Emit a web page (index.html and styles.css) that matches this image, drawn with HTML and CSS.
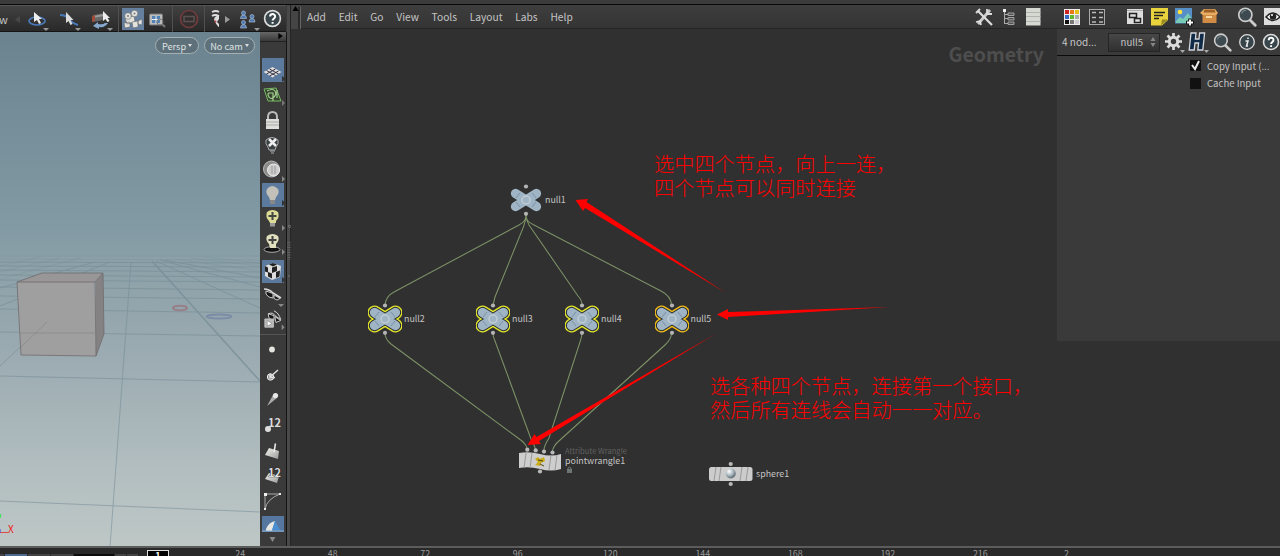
FILE: index.html
```html
<!DOCTYPE html>
<html lang="zh">
<head>
<meta charset="utf-8">
<title>Geometry</title>
<link rel="stylesheet" href="styles.css">
</head>
<body>
<svg width="0" height="0" class="defs">
  <defs>
    <radialGradient id="ball" cx=".35" cy=".3" r=".8"><stop offset="0" stop-color="#fff"/><stop offset=".5" stop-color="#a9b7be"/><stop offset="1" stop-color="#435059"/></radialGradient>
    <linearGradient id="gray" x2="1" y2="1"><stop offset="0" stop-color="#f4f4f0"/><stop offset="1" stop-color="#999"/></linearGradient>
    <symbol id="null" viewBox="-17 -20 34 40" overflow="visible">
      <path class="outline" d="M-10.500-6.500L10.500 6.500M10.500-6.500L-10.500 6.500"/>
      <path class="gap" d="M-10.500-6.500L10.500 6.500M10.500-6.500L-10.500 6.500"/>
      <path d="M-10.500-6.500L10.500 6.500M10.500-6.500L-10.500 6.500" stroke="#9fb5c6" stroke-width="9.300" stroke-linecap="round"/>
      <path d="M-6-4h12v8h-12z" fill="#9fb5c6"/>
      <path d="M-10-2l4-5M-6 7l-4-5M6-7l4 5M10 2l-4 5" stroke="#71889a" stroke-width=".8"/>
      <circle r="4" fill="#9fb5c6" stroke="#c3ccd4" stroke-width="1.500"/>
      <circle cy="-13.500" r="2.100" fill="#b4b4b4"/><circle cy="13.800" r="2.100" fill="#b4b4b4"/>
    </symbol>
    <symbol id="help" viewBox="0 0 18 18"><circle cx="9" cy="9" r="7.500" fill="#39464b" stroke="#ddd" stroke-width="1.600"/><path d="M6.700 7.200C6.700 4 11.500 4.100 11.500 7c0 2-2.400 1.900-2.400 4M9.100 12.300v1.700" stroke="#fff" stroke-width="1.900" fill="none"/></symbol>
    <symbol id="lens" viewBox="0 0 20 20"><path d="M12 12l5.500 5.500" stroke="#ccc" stroke-width="2.600" stroke-linecap="round"/><circle cx="8.500" cy="8" r="6" fill="#3d4b50" stroke="#ccc" stroke-width="1.500"/><path d="M5 7q1-3 4-3" stroke="#728187" fill="none"/></symbol>
  </defs>
</svg>
<div class="strip"></div>
<main class="main">
  <section class="viewer">
    <div class="toolbar">
      <span class="mode">w</span>
      <svg width="17" height="26" viewBox="9 5 17 26"><path d="M20 15v7l-5-3.500z" fill="#484848"/></svg>
      <svg width="28" height="26" viewBox="26 5 28 26"><ellipse cx="37" cy="20" rx="8" ry="4" fill="none" stroke="#4b79b8" stroke-width="1.700"/><path d="M34 11v10l3-2 2 4 2-1-2-4h3z" fill="#eee"/><path d="M43 27h6l-3 3z" fill="#999"/></svg>
      <svg width="32" height="26" viewBox="54 5 32 26"><path d="M60 14q6 0 9 4t9 6" fill="none" stroke="#4878b7" stroke-width="2"/><path d="M66 11v11l2.500-2 2 4 2-1-2-4h3z" fill="#ddd"/><path d="M75 27h6l-3 3z" fill="#999"/></svg>
      <svg width="32" height="26" viewBox="86 5 32 26"><path d="M93 14l11-2v7l-11 2z" fill="#666"/><path d="M93 15l11-2v2l-11 2z" fill="#999"/><path d="M92 15l3-1v6l-3 1z" fill="#a04a3a"/><path d="M103 10v10l2.500-2 2 3 2-1-2-3h2.500z" fill="#eee"/><path d="M108 22q-3 5-9 4v2l-6-3 5-4v2q5 1 7-1z" fill="#87a9d0"/><path d="M107 27h6l-3 3z" fill="#999"/></svg>
      <i class="divider"></i>
      <svg class="camera" width="22" height="22" viewBox="122 8 22 22"><g fill="#e2e2df" stroke="#666" stroke-width=".6"><path d="M125 18l9-2 1 6-8 2zM124 23l6-1v5l-5 1z"/><circle cx="128" cy="16" r="3.300"/><circle cx="134.500" cy="13.500" r="3.300"/><path d="M132 22l6-1v6l-5 1zM138 21l4-2v6l-4-1z"/></g><circle cx="128" cy="16" r="1" fill="#777"/><circle cx="134.500" cy="13.500" r="1" fill="#777"/></svg>
      <svg width="28" height="26" viewBox="144 5 28 26"><rect x="149.500" y="13" width="13" height="11" rx="1" fill="#bbb" stroke="#777"/><rect x="152" y="15" width="8" height="7" fill="#5083b4"/><path d="M156 15v7M152 18.500h8" stroke="#eee"/><circle cx="160" cy="21" r="3" fill="none" stroke="#777"/><path d="M162 23l3 3" stroke="#777" stroke-width="2"/></svg>
      <i class="divider"></i>
      <svg width="31" height="26" viewBox="173 5 31 26"><circle cx="189" cy="18" r="8.500" fill="#322e2e" stroke="#703c3d" stroke-width="1.700"/><rect x="184" y="15.500" width="10" height="5" fill="none" stroke="#5a5050" stroke-width="1.600"/></svg>
      <i class="divider"></i>
      <svg width="33" height="26" viewBox="205 5 33 26"><path d="M212 11q4-2 7 0M212 15q3-2 7 0" fill="none" stroke="#ddd" stroke-width="1.800"/><path d="M219 14q-7 2-4 7t4 5v-3l-2-2 2-3z" fill="#ddd"/><circle cx="215.500" cy="20.500" r="1" fill="#b33"/><path d="M225 15l5 3.500-5 3.500z" fill="#999"/></svg>
      <svg width="25" height="26" viewBox="238 5 25 26"><g fill="#4c79b3" stroke="#bcc8d6" stroke-width=".6"><path d="M240.500 17.500q0-3.500 3-3.500t3 3.500zM240.500 27q0-3.500 3-3.500t3 3.500zM249 21q0-3.500 3-3.500t3 3.500z"/><circle cx="243.500" cy="12" r="2"/><circle cx="243.500" cy="21.500" r="2"/><circle cx="252" cy="15.500" r="2"/></g><path d="M254 27h6l-3 3z" fill="#999"/></svg>
      <svg width="19" height="19"><use href="#help"/></svg>
    </div>
    <div class="stage">
      <div class="viewport">
        <svg class="scene" width="260" height="515" viewBox="0 32 260 515">
          <g stroke="#718994" fill="none" stroke-width=".7" opacity=".3"><path d="M0 256h260M0 259l260 1M80 258L0 279M60 258L0 272M40 257L0 266M175 259l85 12M190 258l70 8M205 257l55 6"/></g>
          <g stroke="#718994" fill="none" stroke-width=".8" opacity=".65">
            <path d="M0 262l260 1M0 266l260 1M0 270l260 2M0 275l260 2M0 280l260 2M0 287l260 3M0 296l260 3M0 309l260 4M0 332l260 4M0 376l260 6M0 501l260 11"/>
            <path d="M131 262L110 547M156 261l104 47M160 260l100 27M165 260l95 18M110 262L0 306M95 262L0 288M0 366l48-45"/>
            <path d="M152 261l108 120" stroke-width="1.500"/>
          </g>
          <path d="M17 282l25-9h61l-7 9z" fill="#989696"/><path d="M96 282l7-9 1 61-8 22z" fill="#858283"/><path d="M17 282h78l1 74-75-1z" fill="#a09f9f"/>
          <path d="M17 282l25-9h61l1 61-8 22-75-1zM17 282h78l8-9M95 282l1 74" fill="none" stroke="#706b6c" stroke-width=".8"/>
          <path d="M20 333h76M21 347l26-25" stroke="#858789" stroke-width=".7"/>
          <ellipse cx="180" cy="308" rx="7" ry="2.300" fill="none" stroke="#987f88" stroke-width="2"/><ellipse cx="219" cy="316.500" rx="12.500" ry="2" fill="none" stroke="#7c8ba6" stroke-width="1.800"/>
          <path d="M0 532.500h8" stroke="#e34a4a"/><path d="M0 529v4" stroke="#34d"/><path d="M0 518l1-4" stroke="#2e4"/>
        </svg>
        <div class="cameras"><button class="pill">Persp<b></b></button><button class="pill wide">No cam<b></b></button></div>
        <span class="axis">X</span>
      </div>
      <div class="tools">
        <svg class="tools-head" width="26" height="10" viewBox="260 32 26 10"><path d="M279 33l5 3.500-5 3.500z" fill="#000"/></svg>
        <svg width="26" height="41" viewBox="260 42 26 41"><rect x="262" y="58" width="22" height="24" fill="#5c7a9e"/><path d="M263.500 72l9-5 9 5-9 5.500z" fill="#ddd"/><path d="M266.500 70.500l9 5M269.500 69l9 5M266.500 74l9-5M269.500 76l9-5" stroke="#334"/><path d="M282 76l4 3-4 3z" fill="#333"/></svg>
        <svg width="26" height="25" viewBox="260 83 26 25"><path d="M264 89l12-1 5 13-13 0z" fill="#35452f" stroke="#78b961"/><path d="M267 91q6-3 8 0t-1 6-5 0 0-4h4v8M277 90v8" fill="none" stroke="#a5cf90" stroke-width="1.200"/><path d="M282 100l3 3-3 3z" fill="#777"/></svg>
        <svg width="26" height="24" viewBox="260 108 26 24"><path d="M268 120v-3q0-5 4.500-5t4.500 5v3" fill="none" stroke="#bbb" stroke-width="2"/><rect x="266" y="119" width="13" height="10" fill="#dededa"/><path d="M266 122h13M266 125h13" stroke="#aaa"/></svg>
        <svg width="26" height="25" viewBox="260 132 26 25"><path d="M268 147q-3-3-2-7 6-5 12 0 1 4-2 7l-1 3h-6z" fill="#3b4142" stroke="#aaa"/><path d="M269 139l7 7M276 139l-7 7" stroke="#eee" stroke-width="2.500"/><path d="M270 151h5M271 153h3" stroke="#aaa"/></svg>
        <svg width="26" height="25" viewBox="260 157 26 25"><circle cx="271.500" cy="169" r="8" fill="#8a8a88" stroke="#bbb"/><circle cx="273.500" cy="170" r="6" fill="#ccc" stroke="#f0f0f0"/><path d="M272 166v8M275 166v8" stroke="#999"/><path d="M282 176l3 3-3 3z" fill="#888"/></svg>
        <svg width="26" height="25" viewBox="260 182 26 25"><rect x="262" y="183" width="22" height="24" fill="#5c7a9e"/><path d="M269 197q-4-4-2-8 5-6 11 0 2 4-2 8l-1 3h-5z" fill="#c1c1ba"/><path d="M270 200h5v4h-5z" fill="#888"/><path d="M282 200l4 3-4 3z" fill="#333"/></svg>
        <svg width="26" height="24" viewBox="260 207 26 24"><path d="M269 221q-4-4-2-9 5.500-4 11 0 2 5-2 9v2h-6z" fill="#dcdc98"/><path d="M272.500 212v8M268.500 216h8" stroke="#444" stroke-width="2"/><path d="M270 223h5v3.500h-5z" fill="#999"/><path d="M282 225l3 3-3 3z" fill="#888"/></svg>
        <svg width="26" height="25" viewBox="260 231 26 25"><ellipse cx="272" cy="249.500" rx="8" ry="2.800" fill="#111" stroke="#aaa"/><path d="M269 244q-4-4-2-8 5.500-4 11 0 2 4-2 8v4h-6z" fill="#e1e1c0"/><path d="M272.500 236v8M268.500 240h8" stroke="#444" stroke-width="2"/><path d="M282 249l3 3-3 3z" fill="#888"/></svg>
        <svg width="26" height="28" viewBox="260 256 26 28"><rect x="262" y="260" width="22" height="23" fill="#5c7a9e"/><path d="M265 266l8-3 8 3-1 11-8 3-7-4z" fill="#ddd"/><path d="M269 264.500l4-1.500 4 1.500-4 2zM265 266l3 1.500v5l-3-1zM268 272l4 1.500v5l-4-2zM272 267.500l5-1.500v5l-5 2zM276 272l4-1.500-.5 6-3.500 1.500z" fill="#222"/><path d="M282 277l4 3-4 3z" fill="#333"/></svg>
        <svg width="26" height="24" viewBox="260 284 26 24"><path d="M264 289q5 0 9 4l8 5" fill="none" stroke="#ddd" stroke-width="1.500"/><path d="M266 291l7 2.500v4.500q-5 0-7-4zM274 295l6 3.500q-3 3-6 0z" fill="#151515" stroke="#ccc"/><path d="M278 304h6l-3 3z" fill="#888"/></svg>
        <svg class="rule" width="26" height="27" viewBox="260 308 26 27"><path d="M268 314q5-2 7 2l6 4M274 311q5 2 7 9" fill="none" stroke="#ddd"/><path d="M268 314l6 2v5l-5-2zM275 317l6 4-5 2z" fill="#151515" stroke="#ccc"/><rect x="264" y="319" width="10" height="9.500" rx="1" fill="#bbb"/><path d="M267 321l5 3-5 3z" fill="#fff" stroke="#777" stroke-width=".6"/><path d="M282 325l3 3-3 3z" fill="#888"/></svg>
        <svg width="26" height="27" viewBox="260 335 26 27"><circle cx="272" cy="349.500" r="2.900" fill="#e4e4e0"/></svg>
        <svg width="26" height="25" viewBox="260 362 26 25"><circle cx="270.500" cy="377" r="3.200" fill="#999" stroke="#eee"/><path d="M270 377l8-7M270 373.500v4h5" stroke="#ddd" stroke-width="1.500" fill="none"/></svg>
        <svg width="26" height="25" viewBox="260 387 26 25"><path d="M267 406l6-11 4 3z" fill="#aaa"/><circle cx="275.500" cy="395.500" r="2.600" fill="#e8e8e8"/></svg>
        <div class="number">12<i></i></div>
        <svg width="26" height="26" viewBox="260 437 26 26"><path d="M269 448l10 3-1 8-13-4z" fill="url(#gray)"/><path d="M274 452l1.500-8.500" stroke="#eee" stroke-width="1.500"/></svg>
        <div class="number prim"><svg width="15" height="11" viewBox="0 0 15 11"><path d="M4 1l10 3-2 7-12-4z" fill="url(#gray)"/></svg>12</div>
        <svg width="26" height="26" viewBox="260 488 26 26"><path d="M265 508v-15h15M265 508q2-10 15-15" fill="none" stroke="#aaa"/><path d="M264 492h3v3h-3zM279 492h2v2h-2zM264 507h2v2h-2z" fill="#eee"/></svg>
        <svg width="26" height="17" viewBox="260 514 26 17"><rect x="262" y="515" width="22" height="16" fill="#55779f"/><path d="M266 528q3-7 9-8l-3 10h-6z" fill="#e8e8e2"/><path d="M275 520l5 9h-8z" fill="#4a8fd2"/><path d="M262 530h22" stroke="#8cb1d5"/></svg>
        <svg width="26" height="16" viewBox="260 531 26 16"><path d="M269.500 536h6l-3 5z" fill="#888"/></svg>
      </div>
    </div>
  </section>
  <div class="splitter"><svg width="4" height="70" viewBox="287 220 4 70"><path d="M288 242v18M290 242v18" stroke="#777" stroke-dasharray="1 1.500"/><path d="M288 226l2-1v3zM288 276h2" stroke="#777"/></svg></div>
  <section class="network">
    <div class="menubar">
      <svg class="handle" width="10" height="24" viewBox="291 5 10 24"><path d="M295.500 6l3 5h-6z" fill="#000"/><path d="M299 7v22" stroke="#111"/><path d="M300.500 7v22" stroke="#666"/></svg>
      <nav class="menu"><span>Add</span><span>Edit</span><span>Go</span><span>View</span><span>Tools</span><span>Layout</span><span>Labs</span><span>Help</span></nav>
      <svg width="23" height="24" viewBox="973 5 23 24"><path d="M978 24l12-14" stroke="#ccc" stroke-width="2.800"/><path d="M978 11l14 14" stroke="#ddd" stroke-width="2.200" fill="none"/><path d="M976 13l4-4M987 9v5h5M976 22l4-1 1 4" stroke="#ddd" stroke-width="1.800" fill="none"/></svg>
      <svg width="25" height="24" viewBox="996 5 25 24"><path d="M1004.500 11v13M1005 14.500h4M1005 18.500h4M1005 23.500h4" stroke="#aaa" fill="none"/><path d="M1003 9h3v3h-3z" fill="#eee"/><path d="M1008 13h6v2.500h-6zM1008 17.500h6v2.500h-6zM1008 22h6v2.500h-6z" fill="#555" stroke="#aaa" stroke-width=".9"/></svg>
      <svg width="41" height="24" viewBox="1021 5 41 24"><path d="M1026 8h14.500v17.500h-14.500z" fill="#d6d8d2"/><path d="M1026 12.500h14.500M1026 16.500h14.500M1026 21.500h14.500" stroke="#b2b2ae"/></svg>
      <svg width="24" height="24" viewBox="1062 5 24 24"><path d="M1064 9h16v16h-16z" fill="#eee"/><path d="M1065 10h4v4h-4z" fill="#c22"/><path d="M1070 10h4v4h-4z" fill="#e97818"/><path d="M1075 10h4v4h-4z" fill="#e5c118"/><path d="M1065 15h4v4h-4z" fill="#3468c5"/><path d="M1070 15h4v4h-4z" fill="#60b92c"/><path d="M1075 15h4v4h-4z" fill="#aaa"/><path d="M1065 20h4v4h-4z" fill="#111"/><path d="M1070 20h4v4h-4z" fill="#777"/><path d="M1075 20h4v4h-4z" fill="#ccc"/></svg>
      <svg width="34" height="24" viewBox="1086 5 34 24"><rect x="1089.500" y="9.500" width="15" height="15" fill="#333" stroke="#aaa"/><path d="M1092 12.500h4M1099 12.500h4M1092 17.500h4M1099 17.500h4M1092 22h4M1099 22h4" stroke="#bbb" stroke-width="1.700"/></svg>
      <svg width="29" height="24" viewBox="1120 5 29 24"><rect x="1127" y="9" width="16" height="15" fill="#ddd"/><path d="M1127 10.500h16" stroke="#aaa"/><path d="M1129.500 13.500h7v4h-7zM1134.500 18.500h6v4h-6z" fill="#ddd" stroke="#222" stroke-width="1.500"/></svg>
      <svg width="24" height="24" viewBox="1149 5 24 24"><path d="M1151 8h17v12l-6 5.500h-11z" fill="#e9d33c"/><path d="M1161 25.500l1-6h6z" fill="#998a20"/><path d="M1154 12.500h11M1154 15.500h9M1154 18.500h5" stroke="#222" stroke-width="1.300"/></svg>
      <svg width="26" height="24" viewBox="1173 5 26 24"><rect x="1175" y="8" width="17" height="15.500" fill="#568fc8"/><circle cx="1180" cy="12" r="2.300" fill="#ffe23a"/><path d="M1176 21l4-4 3 2 5-6 4 6v4h-16z" fill="#78cbb5"/><path d="M1190 18.500v8M1186 22.500h8" stroke="#111" stroke-width="3.600"/><path d="M1190 19.500v6M1187 22.500h6" stroke="#fff" stroke-width="1.800"/></svg>
      <svg width="37" height="24" viewBox="1199 5 37 24"><path d="M1202.500 14h14v9h-14z" fill="#d08c45"/><path d="M1204 9h11l3 4-2 2h-13l-3-2z" fill="#e8ac62"/><path d="M1204.500 9.500h10l1 3h-12z" fill="#9c6128"/><path d="M1206 17h6" stroke="#f5d5a0" stroke-width="2"/></svg>
      <svg width="22" height="22" class="find"><use href="#lens"/></svg>
      <svg class="eye" width="18" height="17" viewBox="0 0 18 17"><path d="M0 0h18v17H0z" fill="#ddd"/><path d="M2 9q7-8 14 0-7 7-14 0z" fill="#fff" stroke="#222" stroke-width="1.500"/><circle cx="9" cy="8.500" r="3.300" fill="#222"/><circle cx="8" cy="7" r="1" fill="#fff"/></svg>
    </div>
    <div class="workspace">
      <div class="canvas">
        <h1 class="context">Geometry</h1>
        <svg class="wires" width="766" height="517" viewBox="291 29 766 517">
          <g fill="none" stroke="#7d9267" stroke-width="1.050">
            <path d="M526 215C526 220 524 222 519 225L394 292Q386 296 385 305M526 215Q526 220 523 228L495 297L493 305M526 215Q526 220 529 225L578 296Q582 300 582 305M526 215C526 220 528 222 534 225L661 291Q671 296 671.500 305"/>
            <path d="M385 333Q385 339 391 344L518 438Q527 444 527 449M493 333Q493 337 495 341L531 439Q535 446 535.500 450M582 333Q582 337 580 342L549 438Q544 446 544 450M671.500 333Q671.500 339 665 345L560 440Q553 446 552.500 451"/>
          </g>
          <g fill="#f00"><path d="M575.500 200l12.500-1-1.500 3L726 293 585 208l-2 3z"/><path d="M717 314.500l11-5.500v3l162-5-162 10v3z"/><path d="M527.500 445l7-11 2 3L717 333 539 441l2 3z"/></g>
        </svg>
        <div class="node null1"><svg width="34" height="40"><use href="#null"/></svg><span>null1</span></div>
        <div class="node null2 picked"><svg width="34" height="40"><use href="#null"/></svg><span>null2</span></div>
        <div class="node null3 picked"><svg width="34" height="40"><use href="#null"/></svg><span>null3</span></div>
        <div class="node null4 picked"><svg width="34" height="40"><use href="#null"/></svg><span>null4</span></div>
        <div class="node null5 picked current"><svg width="34" height="40"><use href="#null"/></svg><span>null5</span></div>
        <div class="node wrangle">
          <svg width="44" height="30" viewBox="518 446 44 30"><path d="M519 453q10-2 21 1t21 0v15q-10 3-21 0t-21-1z" fill="#cecece"/><path d="M526 453l-2 15M532 453l-2 15M551 455l-2 15M557 455l-2 15" stroke="#999"/><path d="M535 459l3-2 2 2 4-2 1 4-4 2-1 3-5-1 3-3z" fill="#c9aa18"/><path d="M538 460l5 1M540 464l4 2" stroke="#54480e"/><g fill="#b9b9b9"><circle cx="527.300" cy="449.700" r="2.100"/><circle cx="535.700" cy="450.400" r="2.100"/><circle cx="544" cy="451.600" r="2.100"/><circle cx="552.500" cy="452.500" r="2.100"/><circle cx="540" cy="471.500" r="2.100"/></g></svg>
          <div class="names"><small>Attribute Wrangle</small><span>pointwrangle1</span><svg width="9" height="7" viewBox="0 0 9 7"><path d="M3 3.500V2q1.500-2 3 0v1.500" fill="none" stroke="#6c7474"/><path d="M2 3h5v4H2z" fill="#6c7474"/></svg></div>
        </div>
        <div class="node sphere"><svg width="44" height="28" viewBox="709 460 44 28"><rect x="709" y="467" width="43.500" height="14" rx="2.500" fill="#ccc"/><path d="M716 467l-2 14M721 467l-2 14M742 467l-2 14M748 467l-2 14" stroke="#999"/><circle cx="730.700" cy="473.500" r="5" fill="url(#ball)"/><circle cx="730.700" cy="464" r="2.100" fill="#b9b9b9"/><circle cx="730.700" cy="484" r="2.100" fill="#b9b9b9"/></svg><span>sphere1</span></div>
        <p class="note upper">选中四个节点，向上一连，<br>四个节点可以同时连接</p>
        <p class="note lower">选各种四个节点，连接第一个接口，<br>然后所有连线会自动一一对应。</p>
      </div>
      <aside class="params">
        <header class="params-head">
          <span class="count">4 nod...</span>
          <div class="select">null5<svg width="8" height="14" viewBox="0 0 8 14"><path d="M1.500 6L4 2l2.500 4zM1.500 8h5L4 12z" fill="#888"/></svg></div>
          <svg width="24" height="24" viewBox="1161 31 24 24"><path d="M1173.500 34v17M1165 42.500h17M1167.500 36.500l12 12M1179.500 36.500l-12 12" stroke="#ddd" stroke-width="2.700"/><circle cx="1173.500" cy="42.500" r="4.200" fill="#3a3a3a" stroke="#ddd" stroke-width="3"/><path d="M1180 51h5l-2.500 3z" fill="#aaa"/></svg>
          <svg width="27" height="24" viewBox="1185 31 27 24"><path d="M1191 34h5l-.6 6h3.600l.6-6h5l-1.800 17h-5l.8-7h-3.600l-.8 7h-5z" fill="#102b48" stroke="#d5d8dc" stroke-width="1.300"/><path d="M1204 51h5l-2.500 3z" fill="#aaa"/></svg>
          <svg width="21" height="21"><use href="#lens"/></svg>
          <svg class="info" width="18" height="18" viewBox="0 0 18 18"><circle cx="9" cy="9" r="7.300" fill="#37444a" stroke="#ddd" stroke-width="1.300"/><path d="M7.500 8H10l-1.500 5H10M10 4.500v1.500" fill="none" stroke="#eee" stroke-width="1.500"/></svg>
          <svg width="18" height="18"><use href="#help"/></svg>
        </header>
        <label class="check"><i><svg width="11" height="11" viewBox="0 0 11 11"><path d="M2 5l3 4 4-8" fill="none" stroke="#eee" stroke-width="2"/></svg></i>Copy Input (...</label>
        <label class="check"><i></i>Cache Input</label>
      </aside>
    </div>
  </section>
</main>
<footer class="timeline">
  <div class="playbar"><i></i><i class="on"></i><i></i><i></i><i class="dark"></i><i></i><i></i></div>
  <div class="frame">1</div>
  <div class="ticks"><span>24</span><span>48</span><span>72</span><span>96</span><span>120</span><span>144</span><span>168</span><span>192</span><span>216</span><span class="cut">2</span></div>
</footer>
</body>
</html>
```

FILE: styles.css
```css
* { box-sizing: border-box; }
body { margin: 0; width: 1280px; height: 556px; overflow: hidden; background: #303030; color: #c4c4c4; font: 9.6px/14px "Noto Sans CJK SC", sans-serif; display: flex; flex-direction: column; }
svg { display: block; flex: none; }
.defs { position: absolute; }
.strip { height: 5px; flex: none; background: #3b3b3b; border-bottom: 1px solid #080808; }
.main { height: 541px; flex: none; display: flex; }
.viewer { width: 287px; flex: none; background: #3a3a3a; }
.toolbar { height: 27px; width: 286px; display: flex; align-items: center; background: linear-gradient(#414141, #292929); border-bottom: 1px solid #151515; border-top: 1px solid #555; }
.mode { width: 9px; font-size: 11px; text-indent: -1px; }
.divider { width: 1px; height: 26px; background: #505050; flex: none; }
.camera { background: #65809f; margin-left: 3px; }
.stage { display: flex; height: 514px; }
.viewport { position: relative; width: 260px; overflow: hidden; background: linear-gradient(#6b838f 0%, #819aa4 38%, #8ba0a7 44%, #9babb1 63%, #b1bdbf 84%, #bec7c6 100%); }
.scene { position: absolute; inset: 0; }
.cameras { position: relative; display: flex; justify-content: flex-end; gap: 5px; padding: 5px 5px 0 0; }
.pill { width: 44px; height: 17px; border: 1px solid #a4b0b4; border-radius: 9px; background: #5e717a; color: #dde1e2; font: inherit; font-size: 9.2px; line-height: 14px; padding: 0; display: flex; align-items: center; justify-content: center; gap: 2px; }
.pill.wide { width: 51px; }
.pill b { border: 2.5px solid transparent; border-top: 3px solid #ddd; border-bottom: 0; }
.axis { position: absolute; left: 8px; bottom: 10px; color: #e22; font-size: 10px; line-height: 14px; }
.tools { width: 27px; background: #3a3a3a; border-right: 1px solid #151515; overflow: hidden; }
.tools-head { background: linear-gradient(#666, #393939); border-bottom: 1px solid #222; }
.rule { border-bottom: 1px solid #555; }
.number { height: 25px; position: relative; font-weight: 700; font-size: 11px; line-height: 20px; padding-left: 8px; color: #ddd; }
.number i { position: absolute; left: 5px; top: 14px; width: 6px; height: 6px; border-radius: 50%; background: #ddd; }
.prim { z-index: 0; height: 26px; line-height: 18px; text-shadow: 0 0 1px #222, 0 0 1px #222; }
.prim svg { position: absolute; left: 5px; top: 9px; z-index: -1; }
.splitter { width: 4px; flex: none; background: #494949; border-right: 1px solid #252525; padding-top: 215px; }
.network { width: 989px; }
.menubar { height: 24px; display: flex; align-items: center; background: linear-gradient(#3e3e3e, #343434); border-bottom: 1px solid #252525; }
.handle { background: #454545; }
.menu { display: flex; gap: 12.8px; padding-left: 6px; width: 672px; flex: none; font-size: 10.200px; line-height: 16px; }
.eye { margin-left: 6px; }
.workspace { display: flex; height: 517px; align-items: flex-start; }
.canvas { position: relative; width: 766px; height: 517px; flex: none; }
.context { margin: 9px 13px 0; text-align: right; color: #4e4e4e; font-size: 19.500px; line-height: 31px; font-weight: 700; }
.wires { position: absolute; inset: 0; }
.node { position: absolute; display: flex; align-items: center; gap: 2px; white-space: nowrap; font-size: 8.900px; }
.null1 { left: 218px; top: 151px; }
.null2 { left: 77px; top: 269.500px; }
.null3 { left: 185px; top: 269.500px; }
.null4 { left: 274px; top: 269.500px; }
.null5 { left: 363.500px; top: 270px; }
.outline, .gap { stroke-linecap: round; }
.outline { stroke: var(--ring, transparent); stroke-width: 14px; }
.gap { stroke: var(--inner, transparent); stroke-width: 11.3px; }
.picked { --ring: #e5e72b; --inner: #262b30; }
.current { --ring: #f3bd18; }
.wrangle { left: 227px; top: 417px; align-items: flex-start; gap: 3px; }
.names { display: flex; flex-direction: column; line-height: 10px; }
.names small { font-size: 7.600px; line-height: 10px; color: #606060; }
.sphere { left: 418px; top: 431px; gap: 3px; }
.note { position: absolute; margin: 0; color: #f00; font: 300 20.2px/24px "Noto Sans CJK SC", sans-serif; white-space: nowrap; }
.upper { left: 363px; top: 123px; }
.lower { left: 419px; top: 345px; }
.params { width: 223px; height: 312px; background: #3a3a3a; overflow: hidden; }
.params-head { height: 27px; display: flex; align-items: center; border-bottom: 1.500px solid #0c0c0c; margin-bottom: 1px; }
.count { width: 51px; padding-left: 5px; flex: none; font-size: 10px; }
.select { width: 52px; height: 19px; flex: none; background: linear-gradient(#474747, #303030); border: 1px solid #252525; display: flex; align-items: center; justify-content: flex-end; gap: 6px; padding-right: 2px; margin-right: 1px; }
.info { margin: 0 6px 0 5px; }
.check { display: flex; align-items: center; height: 17.500px; padding-left: 133px; gap: 6px; white-space: nowrap; }
.check i { width: 11px; height: 11px; background: #111; flex: none; }
.timeline { height: 10px; flex: none; display: flex; background: #292929; border-top: 2px solid #5c5c5c; overflow: hidden; }
.playbar { width: 147px; flex: none; display: flex; gap: 1px; padding-top: 6px; }
.playbar i { width: 22px; height: 4px; background: #444; }
.playbar .on { background: #4d6b90; }
.playbar i:first-child { width: 4px; }
.playbar .dark { width: 40px; background: #0c0c0c; }
.playbar i:nth-last-child(-n+2) { width: 11px; }
.frame { width: 22px; height: 16px; margin-top: 2px; flex: none; border: 1.500px solid #ddd; background: #000; color: #fff; font-weight: 700; font-size: 9px; line-height: 10px; text-align: center; }
.ticks { display: flex; flex: none; margin-left: 25px; color: #999; font-size: 8.800px; line-height: 11px; }
.ticks span { width: 92.500px; text-align: center; flex: none; }
.ticks .cut { width: 80px; }
```
